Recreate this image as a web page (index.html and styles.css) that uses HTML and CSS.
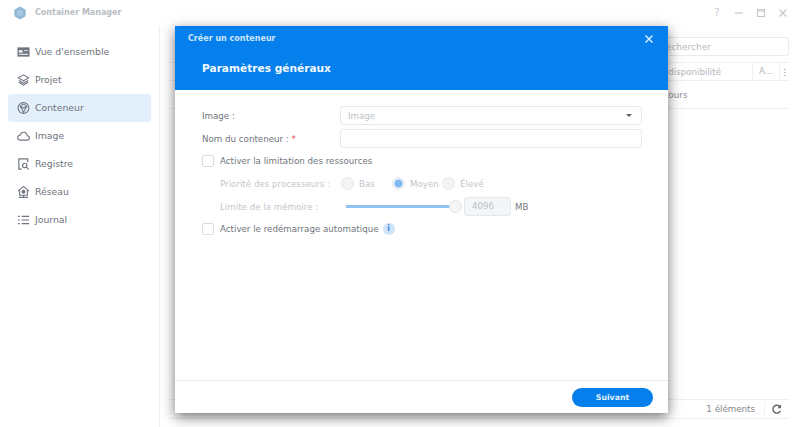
FILE: index.html
```html
<!DOCTYPE html>
<html lang="fr">
<head>
<meta charset="utf-8">
<title>Container Manager</title>
<link rel="stylesheet" href="styles.css">
</head>
<body>
<div class="app">
  <header class="titlebar">
    <svg class="logo" width="14" height="14" viewBox="0 0 16 16"><path d="M8 0.500 14.500 4.200V11.800L8 15.500 1.500 11.800V4.200Z" fill="#8fb9d6"/><path d="M8 4 11.500 6V10L8 12 4.500 10V6Z" fill="#a9c9e0"/></svg>
    <span class="app-name">Container Manager</span>
    <div class="win-controls">
      <span class="win-help">?</span>
      <svg width="10" height="10" viewBox="0 0 10 10"><path d="M1 5H9" stroke="#c4c8cc" stroke-width="1.2"/></svg>
      <svg width="10" height="10" viewBox="0 0 10 10"><path d="M1.500 1.500H8.500V8.500H1.500ZM1.500 3H8.500" stroke="#c4c8cc" stroke-width="1.100" fill="none"/></svg>
      <svg width="10" height="10" viewBox="0 0 10 10"><path d="M1.500 1.500 8.500 8.500M8.500 1.500 1.500 8.500" stroke="#c4c8cc" stroke-width="1.200"/></svg>
    </div>
  </header>
  <div class="workspace">
    <nav class="sidebar">
      <a class="nav-item"><svg width="13" height="14" viewBox="0 0 14 14"><path d="M0.500 2H13.500V12H0.500Z" fill="#6f7680"/><path d="M2 5H6V7.500H2ZM7.500 5H12V6H7.500ZM2 9H12V10H2Z" fill="#fff"/></svg>Vue d'ensemble</a>
      <a class="nav-item"><svg width="13" height="14" viewBox="0 0 14 14" fill="none" stroke="#6f7680" stroke-width="1.200"><path d="M7 1.500 12.500 4.700 7 7.900 1.500 4.700Z"/><path d="M2 7.500 7 10.500 12 7.500M2 9.500 7 12.500 12 9.500"/></svg>Projet</a>
      <a class="nav-item active"><svg width="13" height="14" viewBox="0 0 14 14" fill="none" stroke="#6f7680" stroke-width="1.200"><circle cx="7" cy="7" r="5.800"/><path d="M7 2.800 10.500 5 7 7.200 3.500 5ZM3.500 5 7 11.500 10.500 5"/></svg>Conteneur</a>
      <a class="nav-item"><svg width="13" height="14" viewBox="0 0 14 14" fill="none" stroke="#6f7680" stroke-width="1.200"><path d="M4 11.500H10.800C12.300 11.500 13.300 10.400 13.300 9.100 13.300 7.800 12.300 6.800 11 6.800 10.700 4.300 9.100 3 7.200 3 5.400 3 4 4.200 3.600 6 1.900 6.200 0.700 7.300 0.700 8.800 0.700 10.400 2 11.500 4 11.500Z"/></svg>Image</a>
      <a class="nav-item"><svg width="13" height="14" viewBox="0 0 14 14" fill="none" stroke="#6f7680" stroke-width="1.300"><path d="M5 12.500H2V1.500H11.500V5"/><circle cx="8.300" cy="8.500" r="2.300"/><path d="M10 10.300 12.500 12.800"/></svg>Registre</a>
      <a class="nav-item"><svg width="13" height="14" viewBox="0 0 14 14" fill="none" stroke="#6f7680" stroke-width="1.200"><path d="M1 6 7 1 13 6M2.800 5V10.500H11.200V5"/><circle cx="7" cy="6.800" r="1.500" fill="#6f7680"/><path d="M7 10.500V12.500M2 12.800H12"/></svg>Réseau</a>
      <a class="nav-item"><svg width="13" height="14" viewBox="0 0 14 14" fill="none" stroke="#6f7680" stroke-width="1.300"><path d="M1 3H3M1 7H3M1 11H3M5 3H13M5 7H13M5 11H13"/></svg>Journal</a>
    </nav>
    <main class="content">
      <div class="toolbar"><div class="search">Rechercher</div></div>
      <div class="table-head"><span class="col-dispo">Indisponibilité</span><span class="col-a">A...</span><span class="col-more">⋮</span></div>
      <div class="table-row">En cours</div>
      <div class="spacer"></div>
      <div class="table-foot"><span>1 éléments</span><svg width="11" height="11" viewBox="0 0 12 12" fill="none" stroke="#5f666e" stroke-width="1.500"><path d="M10 3.200A4.300 4.300 0 1 0 10.300 7.500"/><path d="M11 0.500V4.500H7Z" fill="#5f666e" stroke="none"/></svg></div>
    </main>
  </div>
</div>

<section class="dialog">
  <header class="dialog-head">
    <div class="dialog-top"><span class="dialog-title">Créer un conteneur</span>
      <svg width="10" height="10" viewBox="0 0 10 10"><path d="M1.500 1.500 8.500 8.500M8.500 1.500 1.500 8.500" stroke="#d6ebff" stroke-width="1.500"/></svg>
    </div>
    <h1 class="dialog-step">Paramètres généraux</h1>
  </header>
  <div class="dialog-body">
    <div class="field">
      <label class="field-label">Image :</label>
      <div class="input select"><span class="placeholder">Image</span><span class="caret"></span></div>
    </div>
    <div class="field">
      <label class="field-label">Nom du conteneur : <span class="req">*</span></label>
      <div class="input"></div>
    </div>
    <div class="check-row first"><span class="checkbox"></span><span>Activer la limitation des ressources</span></div>
    <div class="sub-row">
      <span class="sub-label">Priorité des processeurs :</span>
      <span class="radio"></span><span class="radio-text bas">Bas</span>
      <span class="radio on"></span><span class="radio-text moyen">Moyen</span>
      <span class="radio"></span><span class="radio-text">Élevé</span>
    </div>
    <div class="sub-row mem">
      <span class="sub-label short">Limite de la mémoire :</span>
      <div class="slider"><span class="knob"></span></div>
      <div class="num">4096</div>
      <span class="unit">MB</span>
    </div>
    <div class="check-row"><span class="checkbox"></span><span>Activer le redémarrage automatique</span><span class="info">i</span></div>
  </div>
  <footer class="dialog-foot"><button class="next">Suivant</button></footer>
</section>
</body>
</html>
```
FILE: styles.css
```css
* { box-sizing: border-box; }
html, body { margin: 0; height: 100%; }
body {
  width: 800px; height: 427px; overflow: hidden; position: relative;
  background: #fff; color: #6e747c;
  font: 8.7px/14px "DejaVu Sans", sans-serif;
}
.app { display: flex; flex-direction: column; height: 427px; }
.titlebar { display: flex; align-items: center; height: 26px; padding: 0 12px 0 13px; flex: none; }
.logo { margin-right: 8px; }
.app-name { font-weight: 700; font-size: 8px; color: #b8bdc3; }
.win-controls { margin-left: auto; display: flex; align-items: center; gap: 12px; }
.win-help { color: #c4c8cc; font-size: 10px; width: 10px; text-align: center; }
.workspace { display: flex; flex: 1; min-height: 0; }
.sidebar { width: 160px; padding: 12px 8px 0; border-right: 1px solid #eef0f2; flex: none; }
.nav-item { display: flex; align-items: center; gap: 5px; height: 28px; padding-left: 9px; border-radius: 3px; color: #6e747c; font-size: 9.3px; }
.nav-item.active { background: #e3effb; }
.content { flex: 1; display: flex; flex-direction: column; padding: 11px 11px 0 9px; min-width: 0; }
.toolbar { display: flex; justify-content: flex-end; height: 19px; }
.search { width: 190px; height: 19px; border: 1px solid #e9ecef; border-radius: 3px; padding-left: 60px; font-size: 9px; color: #b8bdc3; line-height: 18px; overflow: hidden; }
.table-head { display: flex; align-items: center; justify-content: flex-end; height: 19px; margin-top: 6px; border-top: 1px solid #eef0f2; border-bottom: 1px solid #eef0f2; color: #b0b5bb; }
.col-dispo { white-space: nowrap; margin-right: 31px; }
.col-a { width: 28px; height: 100%; line-height: 17px; border-left: 1px solid #eef0f2; border-right: 1px solid #eef0f2; padding-left: 6px; }
.col-more { width: 9px; text-align: center; color: #80868d; }
.table-row { height: 28px; line-height: 28px; border-bottom: 1px solid #eef0f2; padding-left: 481px; color: #8a9097; white-space: nowrap; }
.spacer { flex: 1; }
.table-foot { display: flex; align-items: center; justify-content: flex-end; height: 20px; margin-bottom: 8px; border-top: 1px solid #eef0f2; border-bottom: 1px solid #eef0f2; gap: 6px; padding-right: 7px; color: #80868d; }
.table-foot span { padding-right: 9px; border-right: 1px solid #eef0f2; }

.dialog {
  position: absolute; left: 175px; top: 26px; width: 493px; height: 387px;
  display: flex; flex-direction: column; background: #fff;
  box-shadow: 0 4px 12px rgba(0,0,0,.55);
}
.dialog-head { background: #057feb; height: 64px; flex: none; padding: 0 14px 0 13px; color: #fff; }
.dialog-top { display: flex; justify-content: space-between; align-items: center; height: 26px; }
.dialog-title { font-weight: 700; font-size: 8px; color: #cfe6fb; }
.dialog-step { margin: 6px 0 0 14px; font-size: 10.6px; line-height: 20px; font-weight: 700; color: #f2f9ff; }
.dialog-body { flex: 1; padding: 16px 26px 0 27px; }
.field { display: flex; align-items: center; height: 19px; margin-bottom: 4px; }
.field-label { width: 138px; color: #6e747c; }
.req { color: #e2424b; }
.input { flex: 1; height: 19px; border: 1px solid #e6e9ec; border-radius: 3px; display: flex; align-items: center; justify-content: space-between; padding: 0 9px 0 7px; }
.placeholder { color: #bcc1c6; }
.caret { width: 0; height: 0; border: 3px solid transparent; border-top: 3px solid #5d636a; border-bottom: 0; }
.check-row { display: flex; align-items: center; height: 22.67px; color: #70767d; }
.check-row.first { margin-top: -2px; }
.checkbox { width: 12px; height: 12px; border: 1px solid #d9dde1; border-radius: 2px; margin-right: 6px; flex: none; }
.sub-row { display: flex; align-items: center; height: 22.67px; padding-left: 18px; color: #c2c6cb; }
.sub-label { width: 121px; flex: none; }
.sub-label.short { width: 126px; }
.radio { width: 13px; height: 13px; border: 1px solid #e4e7ea; border-radius: 50%; background: #f3f4f6; flex: none; margin-right: 5px; }
.radio.on { background: radial-gradient(circle, #80b9f1 3.5px, #f0f4f8 4.5px); }
.radio-text.bas { width: 19px; margin-right: 14px; }
.radio-text.moyen { width: 28px; margin-right: 4px; }
.slider { width: 110px; height: 2.500px; background: #90c2ef; position: relative; flex: none; margin-right: 8px; }
.knob { position: absolute; right: -6px; top: -5.500px; width: 13px; height: 13px; border-radius: 50%; border: 1px solid #e2e5e8; background: #f4f5f6; }
.num { width: 47px; height: 19px; border: 1px solid #e6e9ec; border-radius: 3px; background: #f3f5f7; line-height: 17px; padding-left: 7px; margin-right: 4px; flex: none; color: #bcc1c6; }
.unit { color: #70767d; }
.info { width: 12px; height: 12px; border-radius: 50%; background: #cfe4f9; color: #3b8de0; font-weight: 700; font-size: 8px; line-height: 12px; text-align: center; margin-left: 4px; }
.dialog-foot { height: 33px; flex: none; border-top: 1px solid #e8eaed; display: flex; align-items: center; justify-content: flex-end; padding: 0 15px 0 0; }
.next { width: 81px; height: 19px; border: 0; border-radius: 10px; background: #057feb; color: #e4f2ff; font: 700 7.8px "DejaVu Sans", sans-serif; padding: 0; }
```
